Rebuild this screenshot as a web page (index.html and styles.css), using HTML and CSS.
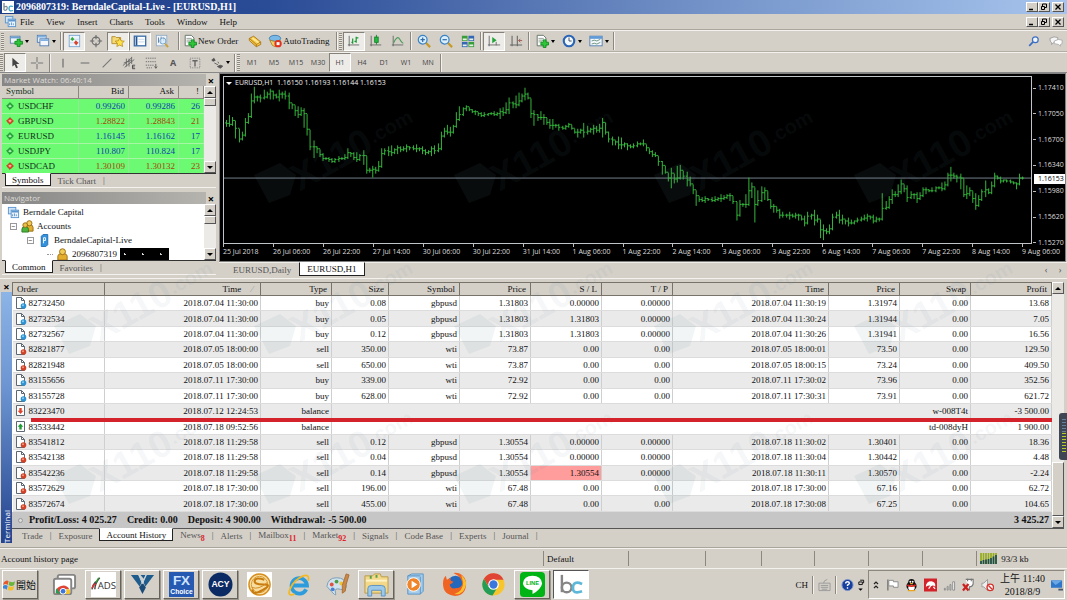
FILE: index.html
```html
<!DOCTYPE html>
<html lang="en">
<head>
<meta charset="utf-8">
<title>2096807319: BerndaleCapital-Live - [EURUSD,H1]</title>
<link rel="stylesheet" href="styles.css">
</head>
<body>
<svg class="defs" aria-hidden="true">
  <symbol id="plus" viewBox="0 0 10 10"><path d="M3.400 .6h3.200v2.800h2.800v3.200H6.600v2.800H3.400V6.600H.6V3.400h2.800z" fill="#2fc43a" stroke="#0b8a1c"/></symbol>
  <symbol id="newchart" viewBox="0 0 16 16"><rect x="1.500" y="2.500" width="11" height="8" fill="#eef4fa" stroke="#5c7fa6"/><path d="M1 4h12" stroke="#6c9ed0" stroke-width="2"/><use href="#plus" x="6" y="5" width="10" height="10"/></symbol>
  <symbol id="profiles" viewBox="0 0 16 16"><rect x="1.500" y="1.500" width="10" height="8" fill="#e8f1fa" stroke="#4d7bb0"/><rect x="4.500" y="5.500" width="10" height="8" fill="#f4f8fc" stroke="#4d7bb0"/><path d="M5 7h9M2 3h9" stroke="#7fb0e0" stroke-width="2"/></symbol>
  <symbol id="market" viewBox="0 0 16 16"><rect x="2.500" y="1.500" width="12" height="13" fill="#eef5fc" stroke="#74a3d0"/><path d="M3 6h11M3 10h11" stroke="#c5d8ea"/><path d="M6 3l2.500 3L6 8 4 6z" fill="#2fae3b"/><path d="M10 7l3 3-2.500 3L8 10z" fill="#d9432c"/></symbol>
  <symbol id="target" viewBox="0 0 16 16"><circle cx="8" cy="8" r="4.500" fill="none" stroke="#6b6b6b" stroke-width="1.300"/><path d="M8 1v5M8 10v5M1 8h5M10 8h5" stroke="#6b6b6b" stroke-width="1.300"/></symbol>
  <symbol id="star" viewBox="0 0 16 16"><path d="M1 3h4l1 1h5v7H1z" fill="#f4d978" stroke="#b28d2c"/><path d="M10 4.500l1.600 3.300 3.600.4-2.600 2.500.7 3.600L10 12.600l-3.300 1.700.7-3.600-2.600-2.500 3.600-.4z" fill="#ffe14a" stroke="#b98c16" stroke-width=".9"/></symbol>
  <symbol id="terminal" viewBox="0 0 16 16"><rect x="1.500" y="2.500" width="13" height="11" fill="#fff" stroke="#3b6ca8" stroke-width="1.500"/><path d="M4 3v10" stroke="#24548e" stroke-width="2"/><path d="M6 6h7M6 9h7" stroke="#c0d2e6"/></symbol>
  <symbol id="tester" viewBox="0 0 16 16"><rect x="1.500" y="1.500" width="12" height="12" fill="#f1f5fa" stroke="#90aac6"/><path d="M4 4v6M7 3v7M10 4v4" stroke="#55769c"/><circle cx="9" cy="8" r="3.500" fill="#d6ebf9" fill-opacity=".8" stroke="#6a9ac2"/><path d="M11.500 11l3.500 4" stroke="#c9a23a" stroke-width="2"/></symbol>
  <symbol id="order" viewBox="0 0 16 16"><path d="M2.500 1.500h7l3 3v9h-10z" fill="#fff" stroke="#5a6b60"/><path d="M4 5h6M4 7h6M4 9h4" stroke="#8b9a90"/><use href="#plus" x="6" y="6" width="10" height="10"/></symbol>
  <symbol id="book" viewBox="0 0 16 16"><path d="M1.500 5l5-2.500 8 6.500v3l-5 2.500-8-7z" fill="#f6c63d" stroke="#a8731a"/><path d="M1.500 5l8 7v2.500M9.500 12l5-3" fill="none" stroke="#a8731a"/><path d="M5 4.500l7 5.500" stroke="#ffe998" stroke-width="2"/></symbol>
  <symbol id="auto" viewBox="0 0 16 16"><ellipse cx="8" cy="5" rx="6.500" ry="3.500" fill="#79b9e8" stroke="#3e7ab0"/><path d="M2 7q6 3 12 0l-2 6q-4 3-7 0z" fill="#f4d064" stroke="#a8812a"/><circle cx="11.500" cy="11" r="4.200" fill="#e0311f"/><rect x="9.800" y="9.300" width="3.400" height="3.400" fill="#fff"/></symbol>
  <symbol id="bars" viewBox="0 0 16 16"><path d="M2.500 2v12M1 12.500h13" stroke="#666"/><path d="M6.500 5v6M5 9.500h1.500M10.500 3v7M10.500 4.500H13M8.500 8.500h2" stroke="#1a9a35" stroke-width="1.400"/></symbol>
  <symbol id="candle" viewBox="0 0 16 16"><path d="M2.500 2v12M1 12.500h13" stroke="#666"/><path d="M8.500 1v11" stroke="#13802a"/><rect x="6.500" y="3.500" width="4" height="6" fill="#22bd3f" stroke="#13802a"/></symbol>
  <symbol id="linec" viewBox="0 0 16 16"><path d="M2.500 2v12M1 12.500h13" stroke="#666"/><path d="M3 10q4-9 7-4t4 4" fill="none" stroke="#4b9a59" stroke-width="1.300"/></symbol>
  <symbol id="zin" viewBox="0 0 16 16"><path d="M10 10l5 5" stroke="#c79a2a" stroke-width="2.500"/><circle cx="6.500" cy="6.500" r="5" fill="#d9effc" stroke="#3c82c4" stroke-width="1.400"/><path d="M4 6.500h5M6.500 4v5" stroke="#2f6dac" stroke-width="1.400"/></symbol>
  <symbol id="zout" viewBox="0 0 16 16"><path d="M10 10l5 5" stroke="#c79a2a" stroke-width="2.500"/><circle cx="6.500" cy="6.500" r="5" fill="#d9effc" stroke="#3c82c4" stroke-width="1.400"/><path d="M4 6.500h5" stroke="#2f6dac" stroke-width="1.400"/></symbol>
  <symbol id="tiles" viewBox="0 0 16 16"><rect x="1" y="2" width="6.500" height="6" fill="#3a9d3c"/><rect x="8.500" y="2" width="6.500" height="6" fill="#3567b5"/><rect x="1" y="9" width="6.500" height="6" fill="#3567b5"/><rect x="8.500" y="9" width="6.500" height="6" fill="#3a9d3c"/><path d="M2 6h4.500M9.500 6H14M2 13h4.500M9.500 13H14" stroke="#e6f3e2" stroke-width="2"/></symbol>
  <symbol id="scroll" viewBox="0 0 16 16"><path d="M2.500 2v12M1 12.500h14M10.500 9v4" stroke="#666"/><path d="M6 3.500l5 3.500-5 3.500z" fill="#22a43a"/></symbol>
  <symbol id="shift" viewBox="0 0 16 16"><path d="M3.500 2v12M1 12.500h14M9.500 2v12" stroke="#666" stroke-width="1.200"/><path d="M15 7.500h-4M13 5.500l-2 2 2 2" stroke="#9a5048" fill="none"/></symbol>
  <symbol id="clock" viewBox="0 0 16 16"><circle cx="8" cy="8" r="6" fill="#f2f8ff" stroke="#2a64b4" stroke-width="2.400"/><path d="M8 4v4h3" fill="none" stroke="#345"/></symbol>
  <symbol id="templ" viewBox="0 0 16 16"><rect x="1" y="2.500" width="14" height="11" fill="#f5f9fd" stroke="#4b78ac"/><path d="M1 4h14" stroke="#5f9bd8" stroke-width="3"/><path d="M3 8l3-1 3 1 4-2M3 11.500l3-1 3 1 4-2" fill="none" stroke="#5d8a72"/></symbol>
  <symbol id="cursor" viewBox="0 0 16 16"><path d="M5 2v10l2.500-2 1.800 4 2-1-1.900-3.800H13z" fill="#444"/></symbol>
  <symbol id="cross" viewBox="0 0 16 16"><path d="M8 1v6M8 9v6M1 8h6M9 8h6" stroke="#777" stroke-width="1.200"/></symbol>
  <symbol id="vline" viewBox="0 0 16 16"><path d="M8 3v10" stroke="#666" stroke-width="1.300"/></symbol>
  <symbol id="hline" viewBox="0 0 16 16"><path d="M3 8h10" stroke="#777" stroke-width="1.300"/></symbol>
  <symbol id="trend" viewBox="0 0 16 16"><path d="M3 13L13 3" stroke="#777" stroke-width="1.300"/></symbol>
  <symbol id="channel" viewBox="0 0 16 16"><path d="M1 11L11 2M3 13L14 4M2 8l9-3M5 3v9M8 3v9M11 1v8" stroke="#666"/><path d="M15 10.500h-3v4h3M12 12.500h2.500" fill="none" stroke="#444"/></symbol>
  <symbol id="fibo" viewBox="0 0 16 16"><path d="M2 2.500h12M2 6.500h12M2 10.500h9M3 13.500h6" stroke="#666" stroke-dasharray="1.500 1"/><path d="M13.500 9v5M12 12l1.500 2 1.500-2" stroke="#555" fill="none"/></symbol>
  <symbol id="label" viewBox="0 0 16 16"><rect x="2.500" y="2.500" width="11" height="11" fill="none" stroke="#777" stroke-dasharray="1 1"/><path d="M5 5.500h6M8 5v7" stroke="#666" stroke-width="1.600"/></symbol>
  <symbol id="arrows" viewBox="0 0 16 16"><path d="M1.500 4.500L4.500 2l2 3-3 1.500z" fill="#555"/><path d="M5 8l4 2M9 6.500l1 2M8.500 12l3.500 2 2.500-2.500-3-1z" fill="#555" stroke="#555"/></symbol>
  <symbol id="up" viewBox="0 0 10 10"><path d="M5 .8L9.200 5 5 9.200.8 5z" fill="#34b147" stroke="#137c26"/><path d="M5 3.500L7 6H3z" fill="#d9ffd9"/></symbol>
  <symbol id="down" viewBox="0 0 10 10"><path d="M5 .8L9.200 5 5 9.200.8 5z" fill="#ec4a2c" stroke="#b22a12"/><path d="M5 6.500L7 4H3z" fill="#ffd9c9"/></symbol>
  <symbol id="doc-buy" viewBox="0 0 12 12"><path d="M1.500 .5h5l3 3v8h-8z" fill="#fff" stroke="#5d6873"/><path d="M6.500 .5v3h3" fill="none" stroke="#5d6873"/><circle cx="8.500" cy="9" r="2.800" fill="#2f93d2"/><circle cx="8" cy="8.200" r="1" fill="#8fd0f2"/></symbol>
  <symbol id="doc-sell" viewBox="0 0 12 12"><path d="M1.500 .5h5l3 3v8h-8z" fill="#fff" stroke="#5d6873"/><path d="M6.500 .5v3h3" fill="none" stroke="#5d6873"/><circle cx="8.500" cy="9" r="2.800" fill="#cf4228"/><circle cx="8" cy="8.200" r="1" fill="#f09a80"/></symbol>
  <symbol id="doc-out" viewBox="0 0 12 12"><path d="M1.500 .5h8v10h-8z" fill="#fff" stroke="#5d6873"/><path d="M5.500 9L2.700 5.800h1.600V3h2.400v2.800h1.600z" fill="#e0432a"/></symbol>
  <symbol id="doc-in" viewBox="0 0 12 12"><path d="M1.500 .5h8v10h-8z" fill="#fff" stroke="#5d6873"/><path d="M5.500 2.500L2.700 5.700h1.600v2.800h2.400V5.700h1.600z" fill="#1f9c34"/></symbol>
  <symbol id="wins" viewBox="0 0 14 14"><rect x="1.500" y="1.500" width="8" height="7" fill="#cfe4f7" stroke="#5b95cd"/><rect x="4.500" y="4.500" width="8" height="8" fill="#eef6fd" stroke="#5b95cd"/><path d="M5 6h7" stroke="#5b95cd" stroke-width="2"/><path d="M6 11V9M8 11V8M10 11V9" stroke="#5b95cd"/></symbol>
  <symbol id="person" viewBox="0 0 12 14"><path d="M1 13V9q0-3 5-3t5 3v4z" fill="#e3ae2e" stroke="#9a6c14"/><circle cx="6" cy="4" r="3.200" fill="#f0cb55" stroke="#9a6c14"/></symbol>
  <symbol id="people" viewBox="0 0 14 14"><path d="M5 12V8q0-3 4-3t4 3v4z" fill="#e3ae2e" stroke="#9a6c14"/><circle cx="9" cy="3.500" r="2.800" fill="#f0cb55" stroke="#9a6c14"/><path d="M1 13v-3q0-3 3.500-3T8 10v3z" fill="#4fb43f" stroke="#2b7c22"/><circle cx="4.500" cy="5.500" r="2.500" fill="#e9c24a" stroke="#9a6c14"/></symbol>
  <symbol id="server" viewBox="0 0 10 14"><path d="M1.500 2.500l2-2h5v11l-2 2h-5z" fill="#3492dc" stroke="#1f6cb0"/><path d="M4 10V4h2v3H4" stroke="#fff" fill="none"/></symbol>
  <symbol id="logo" viewBox="0 0 12 12"><path d="M0 0h12v12H0z" fill="#fff"/><path d="M2 2v7M2 6q4-2 3 2-1 2-3 1" fill="none" stroke="#7a8a98" stroke-width="1.300"/><path d="M11 5.500Q7 4 7 7.500t4 2" fill="none" stroke="#35a6c8" stroke-width="1.300"/></symbol>
</svg>

<header class="titlebar">
  <svg class="i12"><use href="#logo"/></svg>
  <h1>2096807319: BerndaleCapital-Live - [EURUSD,H1]</h1>
  <div class="winbtns">
    <button aria-label="Minimize"><svg viewBox="0 0 8 8"><path d="M1 6.500h4" stroke="#000" stroke-width="1.500"/></svg></button><button aria-label="Restore"><svg viewBox="0 0 8 8"><path d="M2.500 3V1h4v3.500H5M1.500 3.500h3v3h-3z" fill="none" stroke="#000"/></svg></button><button class="gap" aria-label="Close"><svg viewBox="0 0 8 8"><path d="M1.500 1.500l5 5M6.500 1.500l-5 5" stroke="#000" stroke-width="1.300"/></svg></button>
  </div>
</header>

<nav class="menubar">
  <svg class="i14"><use href="#wins"/></svg>
  <button>File</button><button>View</button><button>Insert</button><button>Charts</button><button>Tools</button><button>Window</button><button>Help</button>
  <div class="winbtns">
    <button aria-label="Minimize chart"><svg viewBox="0 0 8 8"><path d="M1 6.500h4" stroke="#000" stroke-width="1.500"/></svg></button><button aria-label="Restore chart"><svg viewBox="0 0 8 8"><path d="M2.500 3V1h4v3.500H5M1.500 3.500h3v3h-3z" fill="none" stroke="#000"/></svg></button><button class="gap" aria-label="Close chart"><svg viewBox="0 0 8 8"><path d="M1.500 1.500l5 5M6.500 1.500l-5 5" stroke="#000" stroke-width="1.300"/></svg></button>
  </div>
</nav>

<div class="toolbar main-tools">
  <i class="grip"></i>
  <button class="tb drop" aria-label="New chart"><svg><use href="#newchart"/></svg></button>
  <button class="tb drop" aria-label="Profiles"><svg><use href="#profiles"/></svg></button>
  <i class="sep"></i>
  <button class="tb on" aria-label="Market Watch"><svg><use href="#market"/></svg></button>
  <button class="tb" aria-label="Data window"><svg><use href="#target"/></svg></button>
  <button class="tb on" aria-label="Navigator"><svg><use href="#star"/></svg></button>
  <button class="tb on" aria-label="Terminal"><svg><use href="#terminal"/></svg></button>
  <button class="tb" aria-label="Strategy tester"><svg><use href="#tester"/></svg></button>
  <i class="sep wide"></i>
  <button class="tb text"><svg><use href="#order"/></svg>New Order</button>
  <button class="tb" aria-label="MetaEditor"><svg><use href="#book"/></svg></button>
  <button class="tb text"><svg><use href="#auto"/></svg>AutoTrading</button>
  <i class="sep"></i><i class="grip"></i>
  <button class="tb on" aria-label="Bar chart"><svg><use href="#bars"/></svg></button>
  <button class="tb" aria-label="Candlesticks"><svg><use href="#candle"/></svg></button>
  <button class="tb" aria-label="Line chart"><svg><use href="#linec"/></svg></button>
  <i class="sep"></i>
  <button class="tb" aria-label="Zoom in"><svg><use href="#zin"/></svg></button>
  <button class="tb" aria-label="Zoom out"><svg><use href="#zout"/></svg></button>
  <button class="tb" aria-label="Tile windows"><svg><use href="#tiles"/></svg></button>
  <i class="sep"></i>
  <button class="tb on" aria-label="Auto scroll"><svg><use href="#scroll"/></svg></button>
  <button class="tb" aria-label="Chart shift"><svg><use href="#shift"/></svg></button>
  <i class="sep"></i>
  <button class="tb drop" aria-label="Indicators"><svg><use href="#order"/></svg></button>
  <button class="tb drop" aria-label="Periods"><svg><use href="#clock"/></svg></button>
  <button class="tb drop" aria-label="Templates"><svg><use href="#templ"/></svg></button>
  <i class="sep"></i>
  <span class="fill"></span>
  <button class="tb" aria-label="Search"><svg viewBox="0 0 16 16"><path d="M7 9l-4.500 4.500" stroke="#3d6fc0" stroke-width="2"/><circle cx="9.500" cy="6.500" r="3.300" fill="#f2f7ff" stroke="#3d6fc0" stroke-width="1.400"/></svg></button>
  <button class="tb" aria-label="Chat"><svg viewBox="0 0 16 16"><path d="M1 5q5-3 9-1v5l-5 1-2 2v-2q-2-1-2-5z" fill="#f4f4f4" stroke="#999"/><path d="M6 8q5-3 9-1v4l-2 1v2l-2-2-5-1z" fill="#fff" stroke="#aaa"/></svg></button>
</div>

<div class="toolbar line-tools">
  <i class="grip"></i>
  <button class="tb on" aria-label="Cursor"><svg><use href="#cursor"/></svg></button>
  <button class="tb" aria-label="Crosshair"><svg><use href="#cross"/></svg></button>
  <i class="sep"></i>
  <button class="tb" aria-label="Vertical line"><svg><use href="#vline"/></svg></button>
  <button class="tb" aria-label="Horizontal line"><svg><use href="#hline"/></svg></button>
  <button class="tb" aria-label="Trendline"><svg><use href="#trend"/></svg></button>
  <button class="tb" aria-label="Channel"><svg><use href="#channel"/></svg></button>
  <button class="tb" aria-label="Fibonacci"><svg><use href="#fibo"/></svg></button>
  <button class="tb letter">A</button>
  <button class="tb" aria-label="Text label"><svg><use href="#label"/></svg></button>
  <button class="tb drop" aria-label="Arrows"><svg><use href="#arrows"/></svg></button>
  <i class="sep"></i><i class="grip"></i>
  <button class="tb tf">M1</button><button class="tb tf">M5</button><button class="tb tf">M15</button><button class="tb tf">M30</button><button class="tb tf on">H1</button><button class="tb tf">H4</button><button class="tb tf">D1</button><button class="tb tf">W1</button><button class="tb tf">MN</button>
  <i class="sep"></i>
</div>

<main class="workspace">
  <aside class="side">
    <section class="panel watch">
      <h2>Market Watch: 06:40:14<button aria-label="Close Market Watch">×</button></h2>
      <div class="panel-body">
        <div class="clip">
        <table class="quotes">
          <colgroup><col><col class="q-num"><col class="q-num"><col class="q-spread"></colgroup>
          <thead><tr><th>Symbol</th><th>Bid</th><th>Ask</th><th>!</th></tr></thead>
          <tbody>
            <tr class="rise"><td><svg><use href="#up"/></svg>USDCHF</td><td>0.99260</td><td>0.99286</td><td>26</td></tr>
            <tr class="fall"><td><svg><use href="#down"/></svg>GBPUSD</td><td>1.28822</td><td>1.28843</td><td>21</td></tr>
            <tr class="rise"><td><svg><use href="#up"/></svg>EURUSD</td><td>1.16145</td><td>1.16162</td><td>17</td></tr>
            <tr class="rise"><td><svg><use href="#up"/></svg>USDJPY</td><td>110.807</td><td>110.824</td><td>17</td></tr>
            <tr class="fall"><td><svg><use href="#down"/></svg>USDCAD</td><td>1.30109</td><td>1.30132</td><td>23</td></tr>
          </tbody>
        </table>
        </div>
        <div class="scroll"><i class="arrow up"></i><i class="thumb short"></i><span class="fill"></span><i class="arrow down"></i></div>
      </div>
      <div class="tabs"><button class="tab active">Symbols</button><button class="tab">Tick Chart</button><i>|</i></div>
    </section>
    <section class="panel navi">
      <h2>Navigator<button aria-label="Close Navigator">×</button></h2>
      <div class="panel-body">
        <ul class="tree">
          <li><svg class="i14"><use href="#wins"/></svg>Berndale Capital</li>
          <li class="l1"><b>−</b><svg class="i14"><use href="#people"/></svg>Accounts</li>
          <li class="l2"><b>−</b><svg class="i14"><use href="#server"/></svg>BerndaleCapital-Live</li>
          <li class="l3"><svg class="i14"><use href="#person"/></svg>2096807319<span class="masked"></span></li>
        </ul>
        <div class="scroll"><i class="arrow up"></i><i class="thumb short"></i><span class="fill"></span><i class="arrow down"></i></div>
      </div>
      <div class="tabs"><button class="tab active">Common</button><button class="tab">Favorites</button><i>|</i></div>
    </section>
  </aside>

  <section class="chart-area">
    <div class="chart">
      <div class="plot">
        <svg id="price-bars" viewBox="0 0 811 170" preserveAspectRatio="none" role="img" aria-label="EURUSD hourly bars"></svg>
        <p class="ohlc"><svg viewBox="0 0 8 6"><path d="M0 1h8L4 5z" fill="#fff"/></svg>EURUSD,H1&nbsp; 1.16150 1.16193 1.16144 1.16153</p>
      </div>
      <div class="prices"><span>1.17410</span><span>1.17050</span><span>1.16700</span><span>1.16340</span><span>1.15980</span><span>1.15620</span><span>1.15270</span><b>1.16153</b></div>
      <div class="times"><span>25 Jul 2018</span><span>26 Jul 06:00</span><span>26 Jul 22:00</span><span>27 Jul 14:00</span><span>30 Jul 06:00</span><span>30 Jul 22:00</span><span>31 Jul 14:00</span><span>1 Aug 06:00</span><span>1 Aug 22:00</span><span>2 Aug 14:00</span><span>3 Aug 06:00</span><span>3 Aug 22:00</span><span>6 Aug 14:00</span><span>7 Aug 06:00</span><span>7 Aug 22:00</span><span>8 Aug 14:00</span><span>9 Aug 06:00</span></div>
    </div>
    <div class="tabs chart-tabs"><button class="tab">EURUSD,Daily</button><button class="tab active">EURUSD,H1</button><span class="fill"></span><button class="nudge" aria-label="Previous">‹</button><button class="nudge" aria-label="Next">›</button></div>
  </section>
</main>

<section class="terminal">
  <div class="rail"><button aria-label="Close Terminal">×</button><h2>Terminal</h2></div>
  <div class="term-main">
    <div class="term-body">
      <div class="history">
        <div class="table-wrap">
        <table>
          <colgroup><col class="c-order"><col class="c-time"><col class="c-mid"><col class="c-size"><col class="c-mid"><col class="c-mid"><col class="c-mid"><col class="c-mid"><col class="c-time"><col class="c-mid"><col class="c-mid"><col class="c-profit"></colgroup>
          <thead><tr><th>Order</th><th>Time <i class="sort">∕</i></th><th>Type</th><th>Size</th><th>Symbol</th><th>Price</th><th>S / L</th><th>T / P</th><th>Time</th><th>Price</th><th>Swap</th><th>Profit</th></tr></thead>
          <tbody>
            <tr><td><svg><use href="#doc-buy"/></svg>82732450</td><td>2018.07.04 11:30:00</td><td>buy</td><td>0.08</td><td>gbpusd</td><td>1.31803</td><td>0.00000</td><td>0.00000</td><td>2018.07.04 11:30:19</td><td>1.31974</td><td>0.00</td><td>13.68</td></tr>
            <tr><td><svg><use href="#doc-buy"/></svg>82732534</td><td>2018.07.04 11:30:00</td><td>buy</td><td>0.05</td><td>gbpusd</td><td>1.31803</td><td>1.31803</td><td>0.00000</td><td>2018.07.04 11:30:24</td><td>1.31944</td><td>0.00</td><td>7.05</td></tr>
            <tr><td><svg><use href="#doc-buy"/></svg>82732567</td><td>2018.07.04 11:30:00</td><td>buy</td><td>0.12</td><td>gbpusd</td><td>1.31803</td><td>1.31803</td><td>0.00000</td><td>2018.07.04 11:30:26</td><td>1.31941</td><td>0.00</td><td>16.56</td></tr>
            <tr><td><svg><use href="#doc-sell"/></svg>82821877</td><td>2018.07.05 18:00:00</td><td>sell</td><td>350.00</td><td>wti</td><td>73.87</td><td>0.00</td><td>0.00</td><td>2018.07.05 18:00:01</td><td>73.50</td><td>0.00</td><td>129.50</td></tr>
            <tr><td><svg><use href="#doc-sell"/></svg>82821948</td><td>2018.07.05 18:00:00</td><td>sell</td><td>650.00</td><td>wti</td><td>73.87</td><td>0.00</td><td>0.00</td><td>2018.07.05 18:00:15</td><td>73.24</td><td>0.00</td><td>409.50</td></tr>
            <tr><td><svg><use href="#doc-buy"/></svg>83155656</td><td>2018.07.11 17:30:00</td><td>buy</td><td>339.00</td><td>wti</td><td>72.92</td><td>0.00</td><td>0.00</td><td>2018.07.11 17:30:02</td><td>73.96</td><td>0.00</td><td>352.56</td></tr>
            <tr><td><svg><use href="#doc-buy"/></svg>83155728</td><td>2018.07.11 17:30:00</td><td>buy</td><td>628.00</td><td>wti</td><td>72.92</td><td>0.00</td><td>0.00</td><td>2018.07.11 17:30:31</td><td>73.91</td><td>0.00</td><td>621.72</td></tr>
            <tr class="marked"><td><svg><use href="#doc-out"/></svg>83223470</td><td>2018.07.12 12:24:53</td><td>balance</td><td colspan="8">w-008T4t</td><td>-3 500.00</td></tr>
            <tr><td><svg><use href="#doc-in"/></svg>83533442</td><td>2018.07.18 09:52:56</td><td>balance</td><td colspan="8">td-008dyH</td><td>1 900.00</td></tr>
            <tr><td><svg><use href="#doc-sell"/></svg>83541812</td><td>2018.07.18 11:29:58</td><td>sell</td><td>0.12</td><td>gbpusd</td><td>1.30554</td><td>0.00000</td><td>0.00000</td><td>2018.07.18 11:30:02</td><td>1.30401</td><td>0.00</td><td>18.36</td></tr>
            <tr><td><svg><use href="#doc-sell"/></svg>83542138</td><td>2018.07.18 11:29:58</td><td>sell</td><td>0.04</td><td>gbpusd</td><td>1.30554</td><td>0.00000</td><td>0.00000</td><td>2018.07.18 11:30:04</td><td>1.30442</td><td>0.00</td><td>4.48</td></tr>
            <tr><td><svg><use href="#doc-sell"/></svg>83542236</td><td>2018.07.18 11:29:58</td><td>sell</td><td>0.14</td><td>gbpusd</td><td>1.30554</td><td class="stopped">1.30554</td><td>0.00000</td><td>2018.07.18 11:30:11</td><td>1.30570</td><td>0.00</td><td>-2.24</td></tr>
            <tr><td><svg><use href="#doc-sell"/></svg>83572629</td><td>2018.07.18 17:30:00</td><td>sell</td><td>196.00</td><td>wti</td><td>67.48</td><td>0.00</td><td>0.00</td><td>2018.07.18 17:30:00</td><td>67.16</td><td>0.00</td><td>62.72</td></tr>
            <tr><td><svg><use href="#doc-sell"/></svg>83572674</td><td>2018.07.18 17:30:00</td><td>sell</td><td>455.00</td><td>wti</td><td>67.48</td><td>0.00</td><td>0.00</td><td>2018.07.18 17:30:08</td><td>67.25</td><td>0.00</td><td>104.65</td></tr>
          </tbody>
        </table>
        </div>
        <div class="totals"><i></i><span>Profit/Loss: 4 025.27</span><span>Credit: 0.00</span><span>Deposit: 4 900.00</span><span>Withdrawal: -5 500.00</span><span class="fill"></span><span>3 425.27</span></div>
      </div>
      <div class="scroll"><i class="arrow up"></i><span class="fill"></span><i class="thumb long"></i><i class="arrow down"></i></div>
    </div>
    <div class="tabs term-tabs"><button class="tab">Trade</button><i>|</i><button class="tab">Exposure</button><button class="tab active">Account History</button><button class="tab">News<sub>8</sub></button><i>|</i><button class="tab">Alerts</button><i>|</i><button class="tab">Mailbox<sub>11</sub></button><i>|</i><button class="tab">Market<sub>92</sub></button><i>|</i><button class="tab">Signals</button><i>|</i><button class="tab">Code Base</button><i>|</i><button class="tab">Experts</button><i>|</i><button class="tab">Journal</button><i>|</i></div>
  </div>
  <div class="gadget"></div>
</section>

<footer class="status"><span>Account history page</span><span>Default</span><span></span><span></span><span></span><span></span><span></span><span></span><span><svg viewBox="0 0 18 11"><path d="M1 0v11M3.500 0v11M6 0v11M8.500 0v11M11 0v11M13.500 0v11M16 0v11" stroke="#94ab18" stroke-width="1.700"/><path d="M1 11V8M3.500 11V7M6 11V6.500M8.500 11V6M11 11V5M13.500 11V3.500M16 11V2" stroke="#1d4c50" stroke-width="1.700"/></svg>93/3 kb</span></footer>

<div class="taskbar">
  <button class="start"><svg viewBox="0 0 14 14"><path d="M1 4q3-3 5-1L5 7Q3 5 0 7z" fill="#e8582c"/><path d="M7 3q3 2 6 0l-1 4q-3 2-6 0z" fill="#6ab43a"/><path d="M0 8q3-2 5 0l-1 4q-2-2-5-1z" fill="#3c84d8"/><path d="M6 8q3 2 6 0l-1 4q-3 2-6 0z" fill="#f4bf2a"/></svg>開始</button>
  <div class="apps">
    <button class="app" aria-label="Chrome Remote Desktop"><svg viewBox="0 0 26 26"><rect x="6" y="3" width="18" height="14" rx="2" fill="#fff" stroke="#858585" stroke-width="2"/><rect x="2" y="7" width="18" height="16" rx="2" fill="#fff" stroke="#858585" stroke-width="2"/><path d="M4 22a7.500 7.500 0 0 1 14-4h-7l-3 5z" fill="#df4434"/><path d="M4 22q-1-3 1-5l4 6z" fill="#279c56"/><path d="M18 18q2 2 0 5h-6l3-5z" fill="#f4c430"/><circle cx="11.500" cy="20" r="3" fill="#3b77dc" stroke="#fff"/></svg></button>
    <button class="app raised" aria-label="ADS"><svg viewBox="0 0 26 26"><path d="M0 0h26v26H0z" fill="#fff"/><path d="M1 18Q2 13 5 10M4 18q0-6 5-12" fill="none" stroke="#444" stroke-width="1.500"/><path d="M1 17q2-5 4-4" fill="none" stroke="#d33" stroke-width="1.500"/><path d="M5 11l3-5" stroke="#393" stroke-width="1.500"/><text x="7" y="18" class="t-ads">ADS</text></svg></button>
    <button class="app raised" aria-label="Wealth terminal"><svg viewBox="0 0 26 26"><path d="M1 3h8l3.500 7L10 15zM11 3h5l-1.800 4zM17 3h8l-9 12-2.300-5z" fill="#1d5c8c"/><path d="M9.500 16l3.500-5 3.500 5-3.500 7z" fill="#194a78"/><path d="M9 3l4 9 4-9" fill="none" stroke="#d4e2ec"/></svg></button>
    <button class="app raised" aria-label="FX Choice"><svg viewBox="0 0 26 26"><path d="M0 0h26v26H0z" fill="#2659b2"/><text x="13" y="14" text-anchor="middle" class="t-fx">FX</text><text x="13" y="23" text-anchor="middle" class="t-choice">Choice</text></svg></button>
    <button class="app raised" aria-label="ACY"><svg viewBox="0 0 26 26"><circle cx="13" cy="13" r="12.500" fill="#0c2a63"/><text x="13" y="16" text-anchor="middle" class="t-acy">ACY</text></svg></button>
    <button class="app" aria-label="Coin"><svg viewBox="0 0 26 26"><path d="M0 0h26v26H0z" fill="#fff"/><circle cx="13" cy="13" r="11" fill="#f8dda0" stroke="#d68f20" stroke-width="1.500"/><circle cx="13" cy="13" r="8.500" fill="none" stroke="#d99a30"/><path d="M18 8q-9-3-10 1t9 4-1 6-10-1" fill="none" stroke="#c87c10" stroke-width="2.200"/><path d="M5 16q7 3 16-5" fill="none" stroke="#d08a20"/></svg></button>
    <button class="app" aria-label="Internet Explorer"><svg viewBox="0 0 26 26"><path d="M21 18a8 8 0 1 1 .8-4H8" fill="none" stroke="#2c9cdc" stroke-width="4"/><path d="M23 9q2-7-5-5Q8 8 4 18q-3 8 5 5" fill="none" stroke="#f4b824" stroke-width="1.800"/></svg></button>
    <button class="app" aria-label="Paint"><svg viewBox="0 0 26 26"><path d="M2 15Q3 6 12 6t10 7-6 5-5 4-9-7z" fill="#cfe2ee" stroke="#7b9cb3"/><circle cx="7" cy="13" r="2" fill="#e25244"/><circle cx="12" cy="10" r="2" fill="#4a9d45"/><circle cx="17" cy="12" r="2" fill="#f1c232"/><circle cx="8" cy="18" r="2" fill="#4a7fd1"/><path d="M22 2l-4 12v8l3-2 1-7 3-10z" fill="#c98848" stroke="#a9703c"/></svg></button>
    <button class="app raised" aria-label="File Explorer"><svg viewBox="0 0 26 26"><path d="M1 4h8l2-2h6l1 3h7v17H1z" fill="#f2d888" stroke="#b99b4c"/><path d="M2 9h22" stroke="#fff3c6" stroke-width="2"/><path d="M7 4v3M13 3v3" stroke="#58a14a" stroke-width="2"/><path d="M4 25v-8q0-3 4-3h10q4 0 4 3v8h-4v-6H8v6z" fill="#9cc8ea" stroke="#5d92bf"/></svg></button>
    <button class="app" aria-label="Media Player"><svg viewBox="0 0 26 26"><path d="M5 4l4-2h12v18l-3 3H5z" fill="#a4cdec" stroke="#5d94c4"/><path d="M18 5v18M5 4h13" stroke="#5d94c4"/><circle cx="11" cy="13" r="7" fill="#ef8428" stroke="#fff"/><path d="M9 9l6 4-6 4z" fill="#fff"/></svg></button>
    <button class="app" aria-label="Firefox"><svg viewBox="0 0 26 26"><circle cx="14" cy="13" r="9" fill="#2468be"/><path d="M12 1q10-1 13 9 1 14-11 15Q1 24 1 12q0-5 3-8l1 4 4-2q-1 4 3 4-1 2-4 3 1 5 6 4 5 0 7-4Q22 6 12 1z" fill="#f06423"/><path d="M20 3q9 8 2 17-4 4-9 3 9-3 9-12z" fill="#fbc02d"/></svg></button>
    <button class="app" aria-label="Chrome"><svg viewBox="0 0 26 26"><circle cx="13" cy="13" r="11.500" fill="#f7c62f"/><path d="M3 7a11.500 11.500 0 0 1 20.500 1H13L8 15z" fill="#df4434"/><path d="M3 7a11.500 11.500 0 0 0 9 17.500L17 16l-9-.5z" fill="#249d56"/><circle cx="13" cy="13" r="5.500" fill="#fff"/><circle cx="13" cy="13" r="4.300" fill="#3b77dc"/></svg></button>
    <button class="app raised" aria-label="LINE"><svg viewBox="0 0 26 26"><rect width="26" height="26" rx="4" fill="#00b415"/><path d="M13 4q9 0 10 8-1 6-10 11v-4Q4 18 3 12q1-8 10-8z" fill="#fff"/><text x="13" y="14" text-anchor="middle" class="t-line">LINE</text></svg></button>
    <button class="app pressed" aria-label="Berndale Capital"><svg viewBox="0 0 26 26"><path d="M3 3v18" stroke="#858585" stroke-width="2.500"/><circle cx="8" cy="16" r="5" fill="none" stroke="#858585" stroke-width="2.500"/><path d="M24 12.500q-9-4-9.500 3.500t9.500 4" fill="none" stroke="#5db7d8" stroke-width="2.800"/></svg></button>
  </div>
  <span class="fill"></span>
  <div class="lang"><button>CH</button><i class="sep"></i>
    <svg viewBox="0 0 14 14"><path d="M1 5h12v8H1zM6 5q0-3 4-4" fill="none" stroke="#999"/><path d="M3 7.500h8M3 9.500h8M4 11.500h6" stroke="#999"/></svg><i class="sep"></i>
    <svg viewBox="0 0 14 14"><circle cx="7" cy="7" r="6" fill="#173f9e" stroke="#7d95c9"/><path d="M5 5.500q0-2 2-2t2 1.700q0 1-2 2v1M7 9.500V11" fill="none" stroke="#fff" stroke-width="1.500"/></svg>
    <svg class="narrow" viewBox="0 0 8 16"><path d="M3 2.500h4v3H6M1.500 4.500h4v3h-4z" fill="none" stroke="#000"/><path d="M1 12h5l-2.500 2.500z"/></svg>
  </div>
  <div class="tray">
    <svg class="narrow" viewBox="0 0 8 14"><path d="M2 6l2-2 2 2M2 10l2-2 2 2" fill="none" stroke="#222" stroke-width="1.200"/></svg>
    <svg viewBox="0 0 14 14"><path d="M2 1v12" stroke="#777" stroke-width="1.500"/><path d="M3 2h5v1.500h5v6H8V8H3z" fill="#fff" stroke="#888"/></svg>
    <svg viewBox="0 0 14 14"><ellipse cx="7" cy="8" rx="5.500" ry="5" fill="#111"/><circle cx="7" cy="4" r="3.500" fill="#111"/><ellipse cx="7" cy="10" rx="3.500" ry="3" fill="#fff"/><path d="M2.500 7q4.500 2.500 9 0" stroke="#d92520" stroke-width="2" fill="none"/><circle cx="5.700" cy="3.500" r="1" fill="#fff"/><circle cx="8.300" cy="3.500" r="1" fill="#fff"/><path d="M3 13h8M5.500 5.500h3" stroke="#eaa51c" stroke-width="1.500"/></svg>
    <svg viewBox="0 0 14 14"><rect width="14" height="14" fill="#d3222a"/><path d="M2 9Q2 3 8 3q5 1 4 6-2-2-4-1-3-1-6 1z" fill="#fff"/><path d="M8 7l-3 4M10 9l2 2" fill="none" stroke="#fff" stroke-width="1.300"/></svg>
    <svg viewBox="0 0 14 14"><path d="M1.500 12.500v-2h1v2zM4.500 12.500v-4h1v4zM7.500 12.500v-6h1v6zM10.500 12.500v-9h2v9z" fill="#fff" stroke="#888"/></svg>
    <svg viewBox="0 0 14 14"><path d="M4 1h8v5q-1 3-4 3v4M6 0v3M10 0v3" fill="#fff" stroke="#777" stroke-width="1.200"/><path d="M1 6l6 7M7 6l-6 7" stroke="#c22" stroke-width="2.400"/></svg>
    <svg viewBox="0 0 14 14"><path d="M1 5h2l4-4v12L3 9H1z" fill="#eee" stroke="#999"/><circle cx="10" cy="9.500" r="3.500" fill="#fff" stroke="#d4332c" stroke-width="1.500"/><path d="M8 7.500l4 4" stroke="#d4332c" stroke-width="1.500"/></svg>
    <time>上午 11:40<br>2018/8/9</time>
    <svg class="desk" viewBox="0 0 13 12"><path d="M0 1h12v8H0z" fill="#2f77c9"/><path d="M0 1h12L5 6z" fill="#69a8e4"/><path d="M8 10h5v2H8z" fill="#4a5868"/></svg>
  </div>
</div>

<svg class="watermark" aria-hidden="true">
  <defs>
    <g id="wm"><path d="M-20-8L6-20 22-8 16 12-5 20z"/><g transform="rotate(-29)"><text x="18" y="20" class="wm-big">X110</text><text x="106" y="14" class="wm-small">.com</text></g></g>
  </defs>
  <g><use href="#wm" x="274" y="183"/><use href="#wm" x="474" y="183"/><use href="#wm" x="674" y="183"/><use href="#wm" x="874" y="183"/></g>
  <g class="soft"><use href="#wm" x="74" y="334"/><use href="#wm" x="274" y="334"/><use href="#wm" x="474" y="334"/><use href="#wm" x="674" y="334"/><use href="#wm" x="874" y="334"/><use href="#wm" x="74" y="484"/><use href="#wm" x="274" y="484"/><use href="#wm" x="474" y="484"/><use href="#wm" x="674" y="484"/><use href="#wm" x="874" y="484"/></g>
</svg>
<script src="chart.js"></script>
</body>
</html>
```

FILE: styles.css
```css
* { box-sizing: border-box; }

:root {
  --face: #d4d0c8;
  --serif: "Liberation Serif", "Noto Sans CJK TC", serif;
  --sans: "Open Sans", "Noto Sans", sans-serif;
}

body {
  margin: 0;
  height: 100vh;
  display: flex;
  flex-direction: column;
  overflow: hidden;
  position: relative;
  background: var(--face);
  color: #111;
  font: 9px/12px var(--serif);
}

button {
  margin: 0;
  padding: 0;
  border: 0;
  background: none;
  color: inherit;
  font: inherit;
}

h1, h2, p, ul { margin: 0; padding: 0; }
ul { list-style: none; }
svg { display: block; flex: none; }
table { border-collapse: collapse; table-layout: fixed; width: 100%; }
.defs { position: absolute; width: 0; height: 0; }
.fill { flex: 1; }
.i12 { width: 12px; height: 12px; }
.i14 { width: 13px; height: 13px; }

/* Title and menu */
.titlebar {
  display: flex;
  align-items: center;
  gap: 2px;
  height: 14px;
  padding: 0 3px 0 2px;
  background: linear-gradient(90deg, #1d3c86, #2a4b96 25%, #7392c8 66%, #a6c4ec);
  color: #fff;
}
.titlebar h1 { font: bold 10px/14px var(--serif); }
.winbtns { margin-left: auto; display: flex; }
.winbtns button {
  width: 12px;
  height: 10px;
  padding: 0 1px;
  background: var(--face);
  border: 1px solid;
  border-color: #fff #555 #555 #fff;
}
.winbtns .gap { margin-left: 2px; }
.winbtns svg { width: 8px; height: 8px; }
.menubar {
  display: flex;
  align-items: center;
  height: 16px;
  padding: 0 3px 0 4px;
  border-bottom: 1px solid #aaa69e;
}
.menubar > button { padding: 0 6px; }
.menubar > button:first-of-type { padding-left: 3px; }

/* Toolbars */
.toolbar {
  display: flex;
  align-items: center;
  border-top: 1px solid #f4f2ee;
  border-bottom: 1px solid #b2aea6;
}
.main-tools { height: 22px; padding-left: 1px; }
.line-tools { height: 21px; border-bottom-color: #888; }
.grip {
  width: 3px;
  height: 17px;
  margin-right: 1px;
  background: repeating-linear-gradient(#8d8981 0 1px, #e8e5df 1px 2px);
}
.sep {
  width: 2px;
  height: 18px;
  margin: 0 1px;
  border-left: 1px solid #8c8880;
  border-right: 1px solid #f4f2ee;
}
.sep.wide { margin-left: 5px; }
.tb {
  width: 22px;
  height: 19px;
  display: flex;
  align-items: center;
  justify-content: center;
  border: 1px solid transparent;
}
.tb svg { width: 14px; height: 14px; }
.tb.on {
  background: #eeece8;
  border-color: #858179 #fff #fff #858179;
}
.tb.drop { width: 27px; gap: 2px; }
.tb.drop::after {
  content: "";
  border: 2px solid transparent;
  border-top: 3px solid #000;
  border-bottom: 0;
}
.tb.text { width: auto; padding-right: 5px; }
.tb.text svg { width: 16px; }
.tb.letter { font: bold 9px/12px var(--sans); color: #555; }
.tb.tf { font: 7px/12px var(--sans); color: #444; }

/* Panels */
.workspace { display: flex; height: 205px; }
.side {
  width: 219px;
  padding: 1px 3px 0 2px;
  display: flex;
  flex-direction: column;
  gap: 4px;
}
.panel { display: flex; flex-direction: column; border-bottom: 1px solid #f4f2ee; }
.watch { height: 114px; }
.navi { height: 83px; }
.panel h2 {
  display: flex;
  justify-content: space-between;
  padding: 0 0 0 2px;
  background: linear-gradient(90deg, #868686, #b8b6b0);
  color: #dedbd5;
  font: 8px/12px var(--sans);
}
.panel h2 button {
  width: 10px;
  background: var(--face);
  color: #000;
  font: bold 11px/11px var(--sans);
}
.panel-body { flex: 1; min-height: 0; display: flex; background: #fff; }
.clip { flex: 1; min-width: 0; overflow: hidden; }
.quotes .q-num { width: 50px; }
.quotes .q-spread { width: 25px; }
.quotes th {
  height: 12px;
  padding: 0 4px;
  background: var(--face);
  border-right: 1px solid #8c8880;
  border-bottom: 1px solid #8c8880;
  font-weight: normal;
  line-height: 11px;
  text-align: right;
}
.quotes th:first-child, .quotes td:first-child { text-align: left; color: #12301a; }
.quotes td {
  height: 15px;
  padding: 0 3px;
  background: #6cfa72;
  border-bottom: 1px solid #a9f5a6;
  border-right: 1px solid #93e895;
  text-align: right;
}
.quotes svg { display: inline-block; width: 8px; height: 8px; margin: 0 4px 0 1px; vertical-align: -1px; }
.rise { color: #0b3fb0; }
.fall { color: #a8440c; }

.scroll {
  width: 12px;
  display: flex;
  flex-direction: column;
  background: #eceae6;
}
.scroll i {
  display: flex;
  align-items: center;
  justify-content: center;
  background: var(--face);
  border: 1px solid;
  border-color: #fff #555 #555 #fff;
}
.scroll .arrow { height: 12px; }
.scroll .arrow::after { content: ""; border: 3px solid transparent; }
.scroll .up::after { border-bottom-color: #000; border-top: 0; }
.scroll .down::after { border-top-color: #000; border-bottom: 0; }
.scroll .short { height: 8px; }
.scroll .long { height: 54px; }

.tabs {
  display: flex;
  align-items: flex-start;
  height: 14px;
  padding-left: 3px;
  border-top: 1px solid #333;
  color: #555;
  line-height: 12px;
}
.tabs i { font-style: normal; }
.tab { height: 13px; padding: 0 7px; }
.tab.active {
  margin-top: -1px;
  background: #fff;
  color: #111;
  border: 1px solid #222;
  border-top-color: #fff;
  padding: 0 6px;
}

.tree { flex: 1; padding: 1px 0 0 5px; overflow: hidden; }
.tree li { display: flex; align-items: center; gap: 3px; height: 14px; white-space: nowrap; }
.tree .l1 { padding-left: 3px; }
.tree .l2 { padding-left: 20px; }
.tree .l3 { padding-left: 49px; }
.tree .l3::before { content: ""; width: 6px; margin-left: -9px; border-top: 1px dotted #999; }
.tree b {
  width: 7px;
  height: 7px;
  margin-right: 1px;
  border: 1px solid #999;
  font: 7px/5px var(--sans);
  text-align: center;
}
.masked {
  width: 49px;
  height: 13px;
  background:
    radial-gradient(circle, #ddd 1px, transparent 1px) 0 2px / 9px 9px no-repeat,
    radial-gradient(circle, #ddd 1px, transparent 1px) 18px 2px / 9px 9px no-repeat,
    radial-gradient(circle, #ccc 1px, transparent 1px) 36px 2px / 9px 9px no-repeat,
    #000;
}

/* Chart */
.chart-area { flex: 1; min-width: 0; display: flex; flex-direction: column; }
.chart {
  flex: 1;
  min-height: 0;
  display: grid;
  grid-template: 1fr 17px / 1fr 33px;
  padding: 2px 0 0 3px;
  margin-right: 1px;
  background: #000;
  border: 1px solid #808080;
  color: #ddd;
  font: 7px/10px var(--sans);
}
.plot { position: relative; min-width: 0; border: 1px solid #bfc4c8; }
.plot > svg { position: absolute; inset: 0; width: 100%; height: 100%; }
.ohlc { position: absolute; top: 1px; left: 2px; display: flex; align-items: center; gap: 3px; color: #f0f0f0; }
.ohlc svg { width: 6px; height: 5px; }
.prices {
  position: relative;
  display: flex;
  flex-direction: column;
  justify-content: space-between;
  padding: 7px 0 0 1px;
  margin-bottom: -4px;
}
.prices span { display: flex; align-items: center; gap: 2px; }
.prices span::before { content: ""; width: 3px; border-top: 1px solid #bbb; }
.prices b {
  position: absolute;
  top: 57%;
  left: 2px;
  right: 0;
  padding-left: 4px;
  background: #fff;
  color: #000;
  font-weight: normal;
}
.times {
  grid-column: 1 / -1;
  display: grid;
  grid-template-columns: repeat(16, 1fr) 43px;
  white-space: nowrap;
}
.times span::before { content: ""; display: block; width: 1px; height: 3px; background: #bbb; }
.chart-tabs { height: 16px; padding-left: 6px; border-top: 1px solid #f0eee8; line-height: 13px; }
.chart-tabs .tab { height: 14px; padding: 0 8px; }
.chart-tabs .active { padding: 0 7px; }
.nudge { width: 14px; font: 9px/13px var(--sans); }

/* Terminal */
.terminal {
  position: relative;
  flex: 1;
  min-height: 0;
  display: flex;
  padding: 3px 3px 4px 1px;
  border-top: 1px solid #f4f2ee;
  border-bottom: 1px solid #aaa69e;
}
.rail {
  width: 11px;
  display: flex;
  flex-direction: column;
  align-items: center;
  justify-content: space-between;
  background: linear-gradient(var(--face) 10px, #8db4e6 10px, #6d95d2 40%, #24438e);
  color: #fff;
}
.rail button { color: #000; font: bold 11px/9px var(--sans); }
.rail h2 { writing-mode: vertical-rl; transform: rotate(180deg); font: 8px/11px var(--sans); }
.term-main { flex: 1; min-width: 0; display: flex; flex-direction: column; }
.term-body { flex: 1; min-height: 0; display: flex; border-bottom: 1px solid #555; }
.history { flex: 1; min-width: 0; display: flex; flex-direction: column; }
.table-wrap { flex: 1; min-height: 0; }
.history table { height: 100%; background: #fff; }
.c-order { width: 92px; }
.c-time { width: 156px; }
.c-mid { width: 71px; }
.c-size { width: 57px; }
.c-profit { width: 81px; }
.history th {
  height: 13px;
  padding: 0 4px;
  background: var(--face);
  border: 1px solid #77736b;
  font-weight: normal;
  line-height: 11px;
  text-align: right;
}
.history td {
  padding: 0 2px;
  border-right: 1px solid #cfcfcf;
  border-bottom: 1px solid #dcdcdc;
  line-height: 14px;
  text-align: right;
}
.history th:first-child, .history td:first-child { text-align: left; }
.history tbody tr:nth-child(even) { background: #eaeaea; }
.history td svg { display: inline-block; width: 12px; height: 12px; margin-right: 2px; vertical-align: -3px; }
.history .stopped { background: #ff9c9c; }
.sort { margin: 0 3px 0 8px; color: #999; font-style: normal; }
.marked { position: relative; }
.marked::after {
  content: "";
  position: absolute;
  z-index: 1;
  left: 18px;
  right: 0;
  bottom: -3px;
  height: 4px;
  background: #d4232b;
}
.totals {
  display: flex;
  align-items: center;
  gap: 10px;
  height: 16px;
  padding: 0 3px 0 6px;
  background: #c6c6c6;
  font: bold 10px/16px var(--serif);
}
.totals i { width: 5px; height: 5px; margin-right: -4px; border: 1px solid #999; border-radius: 50%; background: #ddd; }
.term-tabs { border-top: 0; padding-left: 3px; }
.term-tabs sub { color: #e0202a; font: bold 8px/7px var(--serif); vertical-align: -3px; }
.gadget {
  position: absolute;
  right: 0;
  top: 50%;
  width: 8px;
  height: 47px;
  background:
    repeating-linear-gradient(#b6cc2c 0 1px, #3d4652 1px 3px) 3px 20px / 4px 20px no-repeat,
    repeating-linear-gradient(#66809c 0 1px, #3d4652 1px 3px) 3px 6px / 4px 14px no-repeat,
    #3d4652;
  border-radius: 3px 0 0 3px;
}

/* Status bar */
.status {
  display: grid;
  grid-template-columns: 544fr 85fr 77fr 56fr repeat(4, 54fr) 91fr;
  align-items: center;
  height: 20px;
  border-top: 1px solid #f4f2ee;
}
.status span {
  display: flex;
  align-items: center;
  gap: 3px;
  height: 15px;
  padding-left: 3px;
  border-left: 1px solid #8c8880;
}
.status span:first-child { padding-left: 1px; border-left: 0; }
.status svg { width: 18px; height: 11px; }

/* Taskbar */
.taskbar {
  display: flex;
  align-items: center;
  height: 32px;
  padding: 0 2px;
  border-top: 1px solid #f4f2ee;
}
.start, .raised {
  border: 1px solid;
  border-color: #fff #66625a #66625a #fff;
  box-shadow: 1px 1px 0 #9b978f;
}
.start {
  display: flex;
  align-items: center;
  height: 29px;
  width: 36px;
  font: 10px/14px "Noto Sans CJK TC", sans-serif;
}
.start svg { width: 13px; height: 14px; }
.apps { display: flex; gap: 3px; margin-left: 8px; }
.app {
  width: 36px;
  height: 29px;
  display: flex;
  align-items: center;
  justify-content: center;
}
.app svg { width: 25px; height: 25px; }
.pressed { background: #fff; border: 1px solid; border-color: #555 #fff #fff #555; }
.t-ads { font: 10px var(--sans); fill: #333; }
.t-fx { font: bold 14px "Liberation Sans", sans-serif; fill: #cfe3ff; }
.t-choice { font: bold 7px "Liberation Sans", sans-serif; fill: #fff; }
.t-acy { font: bold 9px "Liberation Sans", sans-serif; fill: #fff; }
.t-line { font: bold 6px "Liberation Sans", sans-serif; fill: #00b415; }
.lang { display: flex; align-items: center; gap: 3px; margin-right: 3px; }
.lang svg, .tray svg { width: 13px; height: 14px; }
.lang .narrow, .tray .narrow { width: 8px; }
.tray {
  display: flex;
  align-items: center;
  gap: 6px;
  height: 29px;
  padding: 0 1px 0 3px;
  border: 1px solid;
  border-color: #8c8880 #fff #fff #8c8880;
}
.tray time { text-align: center; font: 10px/13px var(--serif); }
.tray .desk { width: 12px; height: 12px; }

/* Watermark laid over the whole desktop */
.watermark { position: absolute; inset: 0; width: 100%; height: 100%; pointer-events: none; fill: #6f93ab; fill-opacity: .08; }
.watermark .soft { fill: #5f7f90; fill-opacity: .08; }
.wm-big { font: bold 38px "Liberation Sans", sans-serif; }
.wm-small { font: bold 20px "Liberation Sans", sans-serif; }
```

FILE: chart.js
```js
// Turning points of the price curve: x, centre of the bar, half of its range.
const points = [
  [2,47,4],[8,43,6],[11,54,7],[14,62,5],[18,58,5],[21,48,6],[25,39,7],[27,22,8],[30,18,7],[35,23,4],[40,17,4],[46,17,5],[53,19,4],
  [61,17,6],[64,23,7],[68,30,5],[72,37,5],[78,33,6],[81,45,9],[84,55,8],[87,73,8],[93,74,6],[99,82,3],[108,85,2],[118,83,2],[124,78,4],
  [133,82,4],[139,80,7],[143,94,6],[151,97,4],[156,88,6],[159,76,5],[168,75,5],[178,73,3],[190,72,3],[198,74,4],[203,77,2],[214,73,6],
  [218,62,6],[222,53,7],[228,56,3],[233,43,6],[237,34,6],[243,31,2],[250,35,2],[256,38,2],[268,37,1],[277,37,4],[280,35,6],[284,30,7],
  [290,28,7],[296,22,6],[302,17,5],[304,14,6],[306,23,3],[308,37,7],[312,42,6],[318,39,5],[323,46,4],[330,48,5],[338,52,2],[346,49,2],
  [354,57,3],[361,54,7],[366,54,3],[373,53,4],[380,51,8],[383,55,6],[387,62,6],[391,67,3],[398,67,7],[406,71,2],[414,69,2],[421,67,3],
  [426,76,3],[432,79,2],[435,79,3],[437,91,7],[442,94,4],[445,102,4],[449,103,9],[452,104,10],[458,95,6],[462,103,5],[467,105,7],
  [470,114,5],[474,124,6],[480,125,3],[488,125,2],[498,124,3],[507,121,2],[512,127,6],[515,140,10],[518,131,5],[523,130,4],[527,114,14],
  [530,115,15],[533,131,15],[538,118,10],[543,119,5],[548,129,4],[553,135,4],[558,139,4],[565,142,3],[573,141,3],[579,144,3],[583,147,5],
  [588,142,7],[594,144,6],[598,145,4],[599,160,10],[603,158,5],[608,156,5],[611,147,6],[615,140,7],[620,145,5],[624,148,4],[633,148,2],
  [640,144,2],[648,143,4],[658,147,3],[661,131,10],[665,131,7],[671,122,6],[676,117,6],[680,112,7],[684,115,7],[687,120,7],[692,121,4],
  [697,124,4],[701,116,4],[708,116,2],[718,113,3],[724,110,4],[727,102,6],[731,98,6],[736,103,4],[740,107,8],[743,120,9],[748,115,4],
  [752,125,6],[756,128,7],[760,122,6],[764,114,7],[769,118,5],[773,104,6],[776,102,4],[782,106,2],[790,106,1],[796,111,4],[799,103,4],[802,103,2]
];

const step = 3.125;
const last = points[points.length - 1][0];
let segment = 0;
let previous = points[0][1];
let path = "";

for (let n = 0; points[0][0] + n * step <= last; n++) {
  const x = points[0][0] + n * step;
  while (segment < points.length - 2 && points[segment + 1][0] < x) segment++;
  const [x0, y0, r0] = points[segment];
  const [x1, y1, r1] = points[segment + 1];
  const t = (x - x0) / (x1 - x0);
  const mid = y0 + (y1 - y0) * t;
  const range = (r0 + (r1 - r0) * t) * (0.8 + 0.4 * Math.sin(n * 2.3));
  const close = Math.round(mid + range * 0.5 * Math.sin(n * 1.7)) + 0.5;
  const top = Math.round(Math.min(mid - range, close, previous));
  const bottom = Math.round(Math.max(mid + range, close, previous)) + 1;
  const px = Math.round(x) + 0.5;
  path += `M${px} ${top}V${bottom}M${px - 1.5} ${previous}H${px}M${px} ${close}H${px + 1.5}`;
  previous = close;
}

document.getElementById("price-bars").innerHTML =
  `<path d="M0 103.5H811" stroke="#75818c"/><path d="${path}" fill="none" stroke="#35b83c"/>`;
```
